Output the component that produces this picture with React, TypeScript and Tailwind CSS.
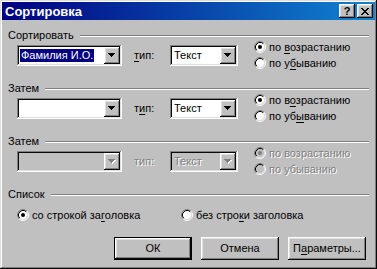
import React from "react";

const RAISED =
  "shadow-[inset_-1px_-1px_#0a0a0a,inset_1px_1px_#ffffff,inset_-2px_-2px_#808080,inset_2px_2px_#dfdfdf]";
const SUNKEN =
  "shadow-[inset_-1px_-1px_#ffffff,inset_1px_1px_#808080,inset_-2px_-2px_#dfdfdf,inset_2px_2px_#0a0a0a]";
const DIS = "text-[#808080] [text-shadow:1px_1px_0_#ffffff]";

function Arrow({ disabled }: { disabled?: boolean }) {
  const rows = [
    [0, 7],
    [1, 5],
    [2, 3],
    [3, 1],
  ];
  return (
    <svg width="8" height="5" viewBox="0 0 8 5" shapeRendering="crispEdges">
      {disabled &&
        rows.map(([y, w], i) => (
          <rect key={"s" + i} x={y + 1} y={i + 1} width={w} height={1} fill="#ffffff" />
        ))}
      {rows.map(([y, w], i) => (
        <rect key={i} x={y} y={i} width={w} height={1} fill={disabled ? "#808080" : "#000"} />
      ))}
    </svg>
  );
}

function CloseGlyph() {
  const px: [number, number, number][] = [
    [0, 0, 2], [6, 0, 2],
    [1, 1, 2], [5, 1, 2],
    [2, 2, 4],
    [3, 3, 2],
    [2, 4, 4],
    [1, 5, 2], [5, 5, 2],
    [0, 6, 2], [6, 6, 2],
  ];
  return (
    <svg width="8" height="7" viewBox="0 0 8 7" shapeRendering="crispEdges">
      {px.map(([x, y, w], i) => (
        <rect key={i} x={x} y={y} width={w} height={1} fill="#000" />
      ))}
    </svg>
  );
}

function RadioIcon({ checked, disabled }: { checked?: boolean; disabled?: boolean }) {
  return (
    <svg width="12" height="12" viewBox="0 0 12 12" className="shrink-0">
      <circle cx="6" cy="6" r="4.2" fill={disabled ? "#c0c0c0" : "#ffffff"} />
      <path d="M2.11 9.89A5.5 5.5 0 0 1 9.89 2.11" fill="none" stroke="#808080" strokeWidth="1" />
      <path d="M9.89 2.11A5.5 5.5 0 0 1 2.11 9.89" fill="none" stroke="#ffffff" strokeWidth="1" />
      <path d="M2.82 9.18A4.5 4.5 0 0 1 9.18 2.82" fill="none" stroke="#000000" strokeWidth="1" />
      <path d="M9.18 2.82A4.5 4.5 0 0 1 2.82 9.18" fill="none" stroke="#dfdfdf" strokeWidth="1" />
      {checked && <circle cx="6" cy="6" r="2" fill={disabled ? "#808080" : "#000"} />}
    </svg>
  );
}

function Combo({
  width,
  disabled,
  children,
}: {
  width: string;
  disabled?: boolean;
  children?: React.ReactNode;
}) {
  return (
    <div
      className={`${width} h-[21px] p-[2px] flex ${SUNKEN} ${
        disabled ? "bg-[#c0c0c0]" : "bg-white"
      }`}
    >
      <div className={`flex-1 flex items-center pl-[2px] overflow-hidden ${disabled ? DIS : ""}`}>
        {children}
      </div>
      <div className={`w-[16px] h-[17px] bg-[#c0c0c0] flex items-center justify-center ${RAISED}`}>
        <Arrow disabled={disabled} />
      </div>
    </div>
  );
}

function Radio({
  checked,
  disabled,
  children,
}: {
  checked?: boolean;
  disabled?: boolean;
  children: React.ReactNode;
}) {
  return (
    <div className="h-[16px] flex items-center gap-[3px]">
      <RadioIcon checked={checked} disabled={disabled} />
      <span className={disabled ? DIS : ""}>{children}</span>
    </div>
  );
}

function GroupLabel({ text, className }: { text: string; className: string }) {
  return (
    <div className={`h-[11px] flex items-center gap-[6px] ${className}`}>
      <span>{text}</span>
      <div className="flex-1 h-[2px] border-t border-t-[#808080] border-b border-b-white" />
    </div>
  );
}

function SortRow({
  disabled,
  typeKey,
  ascKey,
  descKey,
  firstText,
}: {
  disabled?: boolean;
  typeKey: number;
  ascKey: number;
  descKey: number;
  firstText?: React.ReactNode;
}) {
  const mark = (s: string, k: number) =>
    disabled || k < 0 ? (
      s
    ) : (
      <>
        {s.slice(0, k)}
        <u className="underline underline-offset-[2px]">{s[k]}</u>
        {s.slice(k + 1)}
      </>
    );
  return (
    <div className="h-[32px] flex items-start">
      <div className="ml-[9px] mt-[4px]">
        <Combo width="w-[105px]" disabled={disabled}>
          {firstText}
        </Combo>
      </div>
      <div className={`ml-[12px] mt-[4px] w-[36px] h-[21px] flex items-center ${disabled ? DIS : ""}`}>
        <span>{mark("тип:", typeKey)}</span>
      </div>
      <div className="mt-[4px]">
        <Combo width="w-[68px]" disabled={disabled}>
          <span>Текст</span>
        </Combo>
      </div>
      <div className="ml-[16px] -mt-[2px] flex flex-col">
        <Radio checked disabled={disabled}>
          {mark("по возрастанию", ascKey)}
        </Radio>
        <Radio disabled={disabled}>{mark("по убыванию", descKey)}</Radio>
      </div>
    </div>
  );
}

function Button({ children, def }: { children: React.ReactNode; def?: boolean }) {
  return (
    <div
      className={`w-[78px] h-[23px] flex items-center justify-center bg-[#c0c0c0] ${
        def ? "border border-black" : ""
      } ${RAISED}`}
    >
      {children}
    </div>
  );
}

export default function App() {
  return (
    <div
      className={`w-[377px] h-[269px] bg-[#c0c0c0] p-[2px] flex flex-col text-[11px] leading-none text-black font-['Liberation_Sans',Arial,sans-serif] shadow-[inset_-1px_-1px_#0a0a0a,inset_1px_1px_#dfdfdf,inset_-2px_-2px_#808080,inset_2px_2px_#ffffff]`}
    >
      <div className="h-[18px] flex items-center justify-between pl-[3px] pr-[2px] bg-[linear-gradient(90deg,#000080,#1084d0)]">
        <span className="text-white font-bold text-[13px]">Сортировка</span>
        <div className="flex gap-[2px]">
          <div className={`w-[16px] h-[14px] bg-[#c0c0c0] flex items-center justify-center ${RAISED}`}>
            <span className="font-bold text-[11px] leading-none mt-[1px]">?</span>
          </div>
          <div className={`w-[16px] h-[14px] bg-[#c0c0c0] flex items-center justify-center ${RAISED}`}>
            <CloseGlyph />
          </div>
        </div>
      </div>

      <div className="flex flex-col pl-[6px] pr-[6px]">
        <GroupLabel text="Сортировать" className="mt-[10px]" />
        <SortRow
          typeKey={0}
          ascKey={3}
          descKey={4}
          firstText={
            <span className="bg-[#000080] text-white px-[1px] py-[1px] -ml-[1px]">Фамилия И.О.</span>
          }
        />
        <GroupLabel text="Затем" className="mt-[10px]" />
        <SortRow typeKey={1} ascKey={4} descKey={5} />
        <GroupLabel text="Затем" className="mt-[10px]" />
        <SortRow disabled typeKey={-1} ascKey={-1} descKey={-1} />
        <GroupLabel text="Список" className="mt-[10px]" />
        <div className="mt-[7px] flex items-center">
          <div className="ml-[9px] w-[164px]">
            <Radio checked>
              со строкой за<u className="underline underline-offset-[2px]">г</u>оловка
            </Radio>
          </div>
          <Radio>
            без стро<u className="underline underline-offset-[2px]">к</u>и заголовка
          </Radio>
        </div>
        <div className="mt-[14px] flex justify-end gap-[9px] pr-[3px]">
          <Button def>ОК</Button>
          <Button>Отмена</Button>
          <Button>
            <span>
              П<u className="underline underline-offset-[2px]">а</u>раметры...
            </span>
          </Button>
        </div>
      </div>
    </div>
  );
}
